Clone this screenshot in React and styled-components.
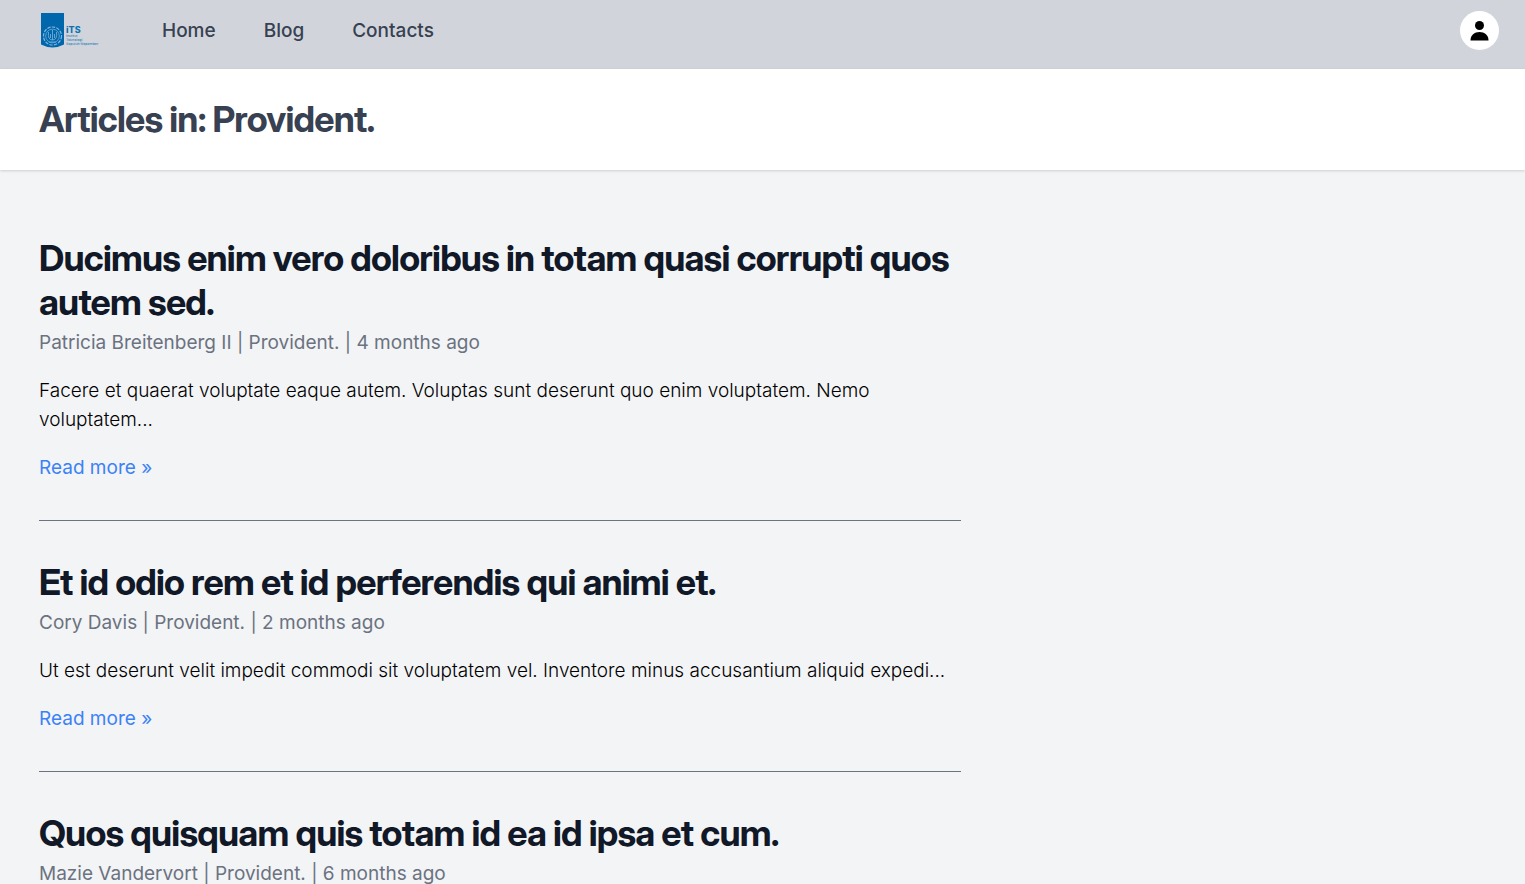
import React from "react";
import styled, { createGlobalStyle } from "styled-components";

const GlobalStyle = createGlobalStyle`
  *, *::before, *::after { box-sizing: border-box; }
  body {
    margin: 0;
    background: #f3f4f6;
    color: #000;
    font-family: Inter, "Liberation Sans", sans-serif;
    font-size: 19px;
    line-height: 29px;
  }
  h1, h2, p { margin: 0; }
  a { color: inherit; text-decoration: none; }
`;

const NavBar = styled.nav`
  display: flex;
  align-items: flex-start;
  justify-content: space-between;
  height: 69px;
  padding: 11px 26px 0 39px;
  background: #d1d5db;
`;

const NavGroup = styled.div`
  display: flex;
  align-items: center;
  gap: 59px;
`;

const LogoLink = styled.a`
  display: block;
  height: 38px;
`;

const NavLinks = styled.div`
  display: flex;
  gap: 48px;
`;

const NavLink = styled.a`
  color: #374151;
  font-weight: 500;
`;

const ProfileButton = styled.button`
  display: flex;
  align-items: center;
  justify-content: center;
  width: 39px;
  height: 39px;
  padding: 0;
  border: 0;
  border-radius: 50%;
  background: #fff;
  color: #000;
  cursor: pointer;
`;

const PageHeader = styled.header`
  padding: 28px 39px 29px;
  background: #fff;
  box-shadow: 0 1px 3px rgba(0, 0, 0, 0.1), 0 1px 2px rgba(0, 0, 0, 0.06);
`;

const Heading = styled.h2`
  color: ${(p) => p.$color || "#111827"};
  font-family: "Inter Display", Inter, "Liberation Sans", sans-serif;
  font-size: 36px;
  font-weight: 700;
  line-height: 44px;
  letter-spacing: -0.022em;
`;

const Main = styled.main`
  padding: 27px 39px;
`;

const ArticleList = styled.div`
  max-width: 922px;
`;

const Article = styled.article`
  padding: 39px 0 38px;
  font-weight: 300;

  & + & { border-top: 1px solid #6b7280; }
`;

const Meta = styled.p`
  margin-top: 4px;
  color: #6b7280;
  font-weight: 400;
`;

const Excerpt = styled.p`
  margin: 19px 0;
`;

const ReadMore = styled.a`
  display: inline-block;
  vertical-align: top;
  color: #3b82f6;
  font-weight: 400;
`;

function Logo() {
  return (
    <svg width="64" height="38" viewBox="0 0 64 38" role="img" aria-label="ITS">
      <path d="M2 2h23v31.500q-11.500 6-23 0z" fill="#0067ac" />
      <g fill="none" stroke="#7fb5dc">
        <circle cx="13.500" cy="25" r="9" strokeWidth="1.200" strokeDasharray="3.400 1.200" />
        <circle cx="13.500" cy="25" r="6.800" strokeWidth="0.700" />
        <path d="M9.500 21q-1 8 4 8t4-8M11.500 23v4M15.500 23v4M13.500 19v10M10 31h7" strokeWidth="0.800" />
      </g>
      <g fill="#0d72b4" fontFamily="Inter, sans-serif">
        <text x="27" y="22" fontSize="9" fontWeight="800">iTS</text>
        <g fontSize="3.500" fontWeight="500" opacity="0.8" textRendering="geometricPrecision">
          <text x="27" y="26">Institut</text>
          <text x="27" y="30">Teknologi</text>
          <text x="27" y="34">Sepuluh Nopember</text>
        </g>
      </g>
    </svg>
  );
}

function PersonIcon() {
  return (
    <svg width="20" height="20" viewBox="0 0 20 20" fill="currentColor" aria-hidden="true">
      <circle cx="9.500" cy="4.500" r="4.500" />
      <path d="M0.500 19.500c0-5.500 4-8.500 9-8.500s9 3 9 8.500z" />
    </svg>
  );
}

const articles = [
  {
    title: "Ducimus enim vero doloribus in totam quasi corrupti quos autem sed.",
    meta: "Patricia Breitenberg II | Provident. | 4 months ago",
    excerpt:
      "Facere et quaerat voluptate eaque autem. Voluptas sunt deserunt quo enim voluptatem. Nemo voluptatem...",
  },
  {
    title: "Et id odio rem et id perferendis qui animi et.",
    meta: "Cory Davis | Provident. | 2 months ago",
    excerpt:
      "Ut est deserunt velit impedit commodi sit voluptatem vel. Inventore minus accusantium aliquid expedi...",
  },
  {
    title: "Quos quisquam quis totam id ea id ipsa et cum.",
    meta: "Mazie Vandervort | Provident. | 6 months ago",
  },
];

export default function App() {
  return (
    <>
      <GlobalStyle />
      <NavBar>
        <NavGroup>
          <LogoLink href="#home"><Logo /></LogoLink>
          <NavLinks>
            <NavLink href="#home">Home</NavLink>
            <NavLink href="#blog">Blog</NavLink>
            <NavLink href="#contacts">Contacts</NavLink>
          </NavLinks>
        </NavGroup>
        <ProfileButton type="button" aria-label="Open user menu">
          <PersonIcon />
        </ProfileButton>
      </NavBar>
      <PageHeader>
        <Heading as="h1" $color="#374151">Articles in: Provident.</Heading>
      </PageHeader>
      <Main>
        <ArticleList>
          {articles.map((a) => (
            <Article key={a.title}>
              <Heading><a href="#article">{a.title}</a></Heading>
              <Meta>{a.meta}</Meta>
              {a.excerpt && (
                <>
                  <Excerpt>{a.excerpt}</Excerpt>
                  <ReadMore href="#article">Read more »</ReadMore>
                </>
              )}
            </Article>
          ))}
        </ArticleList>
      </Main>
    </>
  );
}
